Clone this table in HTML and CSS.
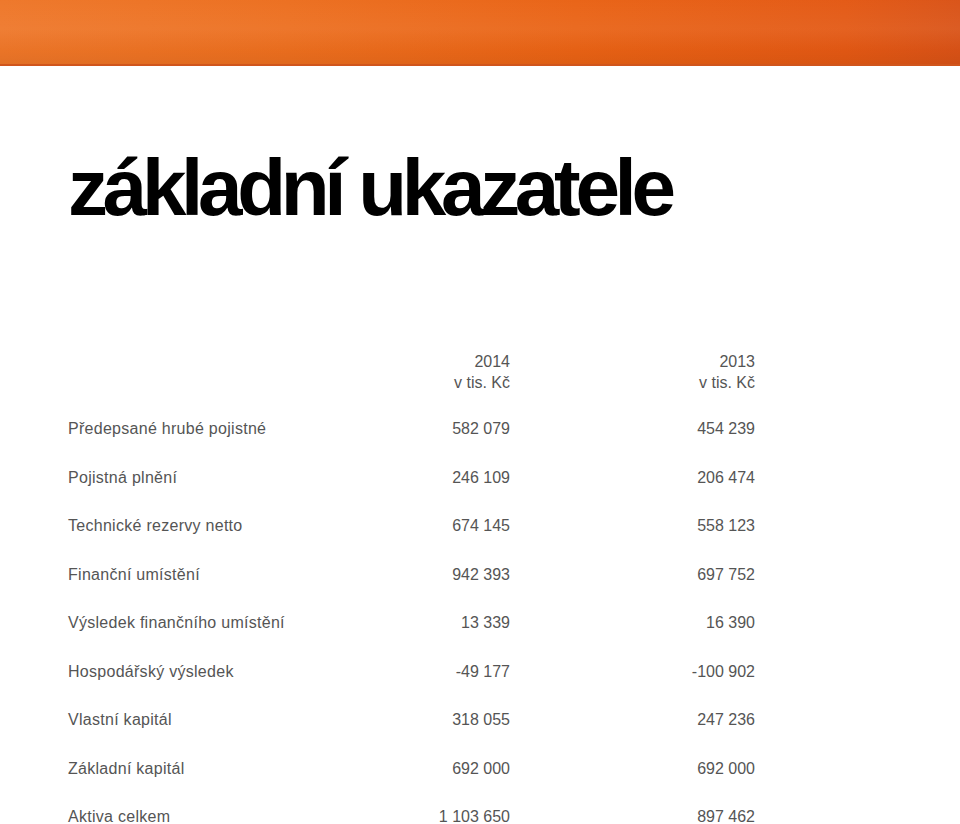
FILE: index.html
```html
<!DOCTYPE html>
<html lang="cs">
<head>
<meta charset="utf-8">
<link rel="stylesheet" href="styles.css">
</head>
<body>
<header class="banner"></header>
<main class="content">
  <h1 class="title">základní ukazatele</h1>
  <table class="figures">
    <thead>
      <tr><th class="label"></th><th class="num">2014<br>v tis. Kč</th><th class="num">2013<br>v tis. Kč</th></tr>
    </thead>
    <tbody>
      <tr><td class="label">Předepsané hrubé pojistné</td><td class="num">582 079</td><td class="num">454 239</td></tr>
      <tr><td class="label">Pojistná plnění</td><td class="num">246 109</td><td class="num">206 474</td></tr>
      <tr><td class="label">Technické rezervy netto</td><td class="num">674 145</td><td class="num">558 123</td></tr>
      <tr><td class="label">Finanční umístění</td><td class="num">942 393</td><td class="num">697 752</td></tr>
      <tr><td class="label">Výsledek finančního umístění</td><td class="num">13 339</td><td class="num">16 390</td></tr>
      <tr><td class="label">Hospodářský výsledek</td><td class="num">-49 177</td><td class="num">-100 902</td></tr>
      <tr><td class="label">Vlastní kapitál</td><td class="num">318 055</td><td class="num">247 236</td></tr>
      <tr><td class="label">Základní kapitál</td><td class="num">692 000</td><td class="num">692 000</td></tr>
      <tr><td class="label">Aktiva celkem</td><td class="num">1 103 650</td><td class="num">897 462</td></tr>
    </tbody>
  </table>
</main>
</body>
</html>
```
FILE: styles.css
```css
html, body {
  margin: 0;
  padding: 0;
  background: #ffffff;
}
body {
  font-family: "Liberation Sans", Arial, sans-serif;
  color: #555555;
}
.banner {
  height: 64px;
  border-bottom: 2px solid #d0551c;
  background:
    linear-gradient(180deg, rgba(255,255,255,0.02) 0%, rgba(255,255,255,0.06) 45%, rgba(0,0,0,0.02) 80%, rgba(0,0,0,0.05) 100%),
    linear-gradient(90deg, #ee7628 0%, #ec6e1e 30%, #e96214 60%, #e35813 88%, #d95216 100%);
}
.content {
  padding: 0 0 0 68px;
}
.title {
  margin: 0;
  padding-top: 74px;
  font-size: 80px;
  line-height: 96px;
  font-weight: bold;
  letter-spacing: -5.3px;
  color: #000000;
}
.figures {
  margin-top: 115px;
  border-collapse: collapse;
  font-size: 16px;
}
.figures th, .figures td {
  padding: 0;
  font-weight: normal;
}
.figures thead th {
  line-height: 21px;
  padding-bottom: 26px;
}
.figures tbody td {
  height: 48.5px;
  line-height: 20px;
  vertical-align: top;
}
.label {
  width: 290px;
  text-align: left;
  letter-spacing: 0.28px;
}
.num {
  text-align: right;
}
.figures .num:nth-child(2) { width: 152px; }
.figures .num:nth-child(3) { width: 245px; }
```
